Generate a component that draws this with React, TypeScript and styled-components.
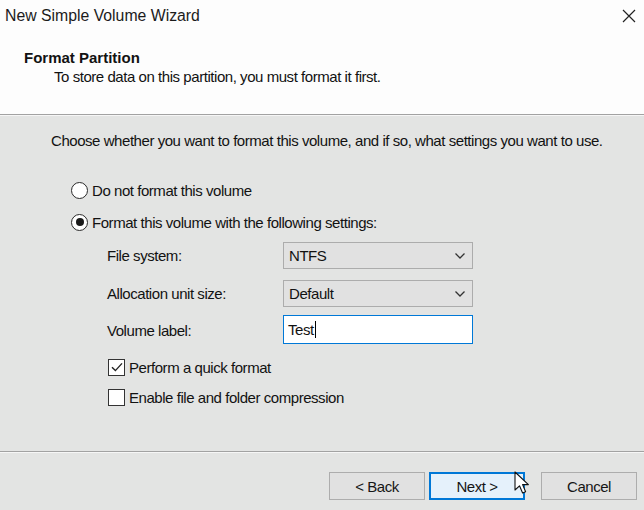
import styled, { createGlobalStyle } from 'styled-components';
import { useState } from 'react';

/**
 * Page reset
 */
const GlobalStyle = createGlobalStyle`
  html, body {
    margin: 0;
    padding: 0;
    background: #e3e4e3;
  }

  * {
    box-sizing: border-box;
  }
`;

/**
 * Format Partition wizard page
 */
const App: React.FC = () => {
  const [formatVolume, setFormatVolume] = useState(true);
  const [quick, setQuick] = useState(true);
  const [compress, setCompress] = useState(false);

  return (
    <Window>
      <GlobalStyle />
      <Header>
        <TitleBar>
          <span>New Simple Volume Wizard</span>
          <CloseIcon width='16' height='16' viewBox='0 0 16 16'>
            <path d='M2 2 L14 14 M14 2 L2 14' stroke='#222' strokeWidth='1.2' fill='none' />
          </CloseIcon>
        </TitleBar>
        <PageTitle>Format Partition</PageTitle>
        <PageSubtitle>To store data on this partition, you must format it first.</PageSubtitle>
      </Header>

      <Body>
        <Intro>Choose whether you want to format this volume, and if so, what settings you want to use.</Intro>

        <RadioList>
          <Option onClick={ () => setFormatVolume(false) }>
            <Radio checked={ !formatVolume } />
            Do not format this volume
          </Option>
          <Option onClick={ () => setFormatVolume(true) }>
            <Radio checked={ formatVolume } />
            Format this volume with the following settings:
          </Option>
        </RadioList>

        <Settings>
          <FieldLabel>File system:</FieldLabel>
          <Select>
            NTFS
            <Chevron />
          </Select>
          <FieldLabel>Allocation unit size:</FieldLabel>
          <Select>
            Default
            <Chevron />
          </Select>
          <FieldLabel>Volume label:</FieldLabel>
          <TextBox>
            Test<Caret />
          </TextBox>
        </Settings>

        <CheckList>
          <Option onClick={ () => setQuick(!quick) }>
            <Checkbox checked={ quick }>
              { quick && (
                <svg width='14' height='14' viewBox='0 0 14 14'>
                  <path d='M2 7.2 L5.4 10.6 L12 3.4' stroke='#222' strokeWidth='1.4' fill='none' />
                </svg>
              ) }
            </Checkbox>
            Perform a quick format
          </Option>
          <Option onClick={ () => setCompress(!compress) }>
            <Checkbox checked={ compress } />
            Enable file and folder compression
          </Option>
        </CheckList>
      </Body>

      <Footer>
        <Button>&lt; Back</Button>
        <Button primary>Next &gt;</Button>
        <Button spaced>Cancel</Button>
        <Cursor width='18' height='26' viewBox='0 0 18 26'>
          <path d='M1 1 L1 19 L5.5 14.8 L8.6 22 L11.6 20.7 L8.6 13.6 L14.4 13.6 Z'
            fill='#fff' stroke='#111' strokeWidth='1.1' strokeLinejoin='round' />
        </Cursor>
      </Footer>
    </Window>
  );
};

/**
 * Dialog window
 */
const Window = styled.div`
  width: 644px;
  height: 510px;
  display: flex;
  flex-direction: column;
  background: #e3e4e3;
  color: #121212;
  font-family: "Liberation Sans", Arial, sans-serif;
  font-size: 15px;
  letter-spacing: -0.45px;
  overflow: hidden;
`;

/**
 * White header band with the page title
 */
const Header = styled.div`
  height: 115px;
  background: #fdfdfd;
  border-bottom: 1px solid #a2a2a2;
  box-shadow: 0 1px 0 #f6f6f6;
`;

const TitleBar = styled.div`
  height: 32px;
  padding: 0 7px 0 5px;
  display: flex;
  align-items: center;
  justify-content: space-between;
  font-size: 15.8px;
  letter-spacing: 0;
  color: #1b1b1b;
`;

const CloseIcon = styled.svg`
  display: block;
`;

const PageTitle = styled.div`
  margin: 17px 0 0 24px;
  font-weight: bold;
  line-height: 18px;
  letter-spacing: 0;
`;

const PageSubtitle = styled.div`
  margin: 1px 0 0 54px;
  line-height: 18px;
`;

/**
 * Grey body of the page
 */
const Body = styled.div`
  flex: 1;
  padding-top: 17px;
`;

const Intro = styled.div`
  padding-left: 51px;
  line-height: 18px;
`;

const RadioList = styled.div`
  margin-top: 24px;
  padding-left: 71px;
`;

const Option = styled.div`
  height: 32px;
  display: flex;
  align-items: center;
  cursor: default;
  user-select: none;
`;

const Radio = styled.span<{ checked: boolean }>`
  width: 17px;
  height: 17px;
  margin-right: 4px;
  border-radius: 50%;
  border: 1.5px solid #2a2a2a;
  background: #fff;
  display: flex;
  align-items: center;
  justify-content: center;

  &::after {
    content: '';
    width: 8px;
    height: 8px;
    border-radius: 50%;
    background: #1a1a1a;
    display: ${ p => p.checked ? 'block' : 'none' };
  }
`;

/**
 * Grid of format settings
 */
const Settings = styled.div`
  margin-top: 4px;
  padding-left: 107px;
  display: grid;
  grid-template-columns: 176px 190px;
  row-gap: 11px;
  align-items: center;
`;

const FieldLabel = styled.div`
  line-height: 18px;
`;

const Select = styled.div`
  height: 27px;
  padding: 0 0 0 5px;
  display: flex;
  align-items: center;
  justify-content: space-between;
  background: #e1e1e1;
  border: 1px solid #acacac;
`;

const ChevronSvg = styled.svg`
  margin-right: 6px;
`;

const Chevron: React.FC = () => (
  <ChevronSvg width='12' height='8' viewBox='0 0 12 8'>
    <path d='M1.5 1.5 L6 6 L10.5 1.5' stroke='#333' strokeWidth='1.3' fill='none' />
  </ChevronSvg>
);

const TextBox = styled.div`
  height: 29px;
  margin-top: -3px;
  padding-left: 4px;
  display: flex;
  align-items: center;
  background: #fff;
  border: 1.5px solid #0078d7;
`;

const Caret = styled.span`
  width: 1px;
  height: 17px;
  margin-left: 1px;
  background: #000;
`;

const CheckList = styled.div`
  margin-top: 8px;
  padding-left: 108px;

  ${ Option } {
    height: 30px;
  }
`;

const Checkbox = styled.span<{ checked: boolean }>`
  width: 17px;
  height: 17px;
  margin-right: 4px;
  border: 1.5px solid #333;
  background: #fff;
  display: flex;
  align-items: center;
  justify-content: center;
`;

/**
 * Bottom button bar
 */
const Footer = styled.div`
  position: relative;
  height: 59px;
  border-top: 1px solid #a2a2a2;
  box-shadow: inset 0 1px 0 #f6f6f6;
  padding: 20px 7px 0 0;
  display: flex;
  justify-content: flex-end;
  align-items: flex-start;
  gap: 4px;
`;

const Button = styled.button<{ primary?: boolean; spaced?: boolean }>`
  width: 96px;
  height: 28px;
  margin-left: ${ p => p.spaced ? '12px' : '0' };
  font-family: inherit;
  font-size: 15px;
  letter-spacing: -0.45px;
  color: #161616;
  background: ${ p => p.primary ? '#e5f1fb' : '#e1e1e1' };
  border: ${ p => p.primary ? '2px solid #0078d7' : '1px solid #adadad' };
  padding: 0;
`;

const Cursor = styled.svg`
  position: absolute;
  left: 514px;
  top: 19px;
`;

export default App;
